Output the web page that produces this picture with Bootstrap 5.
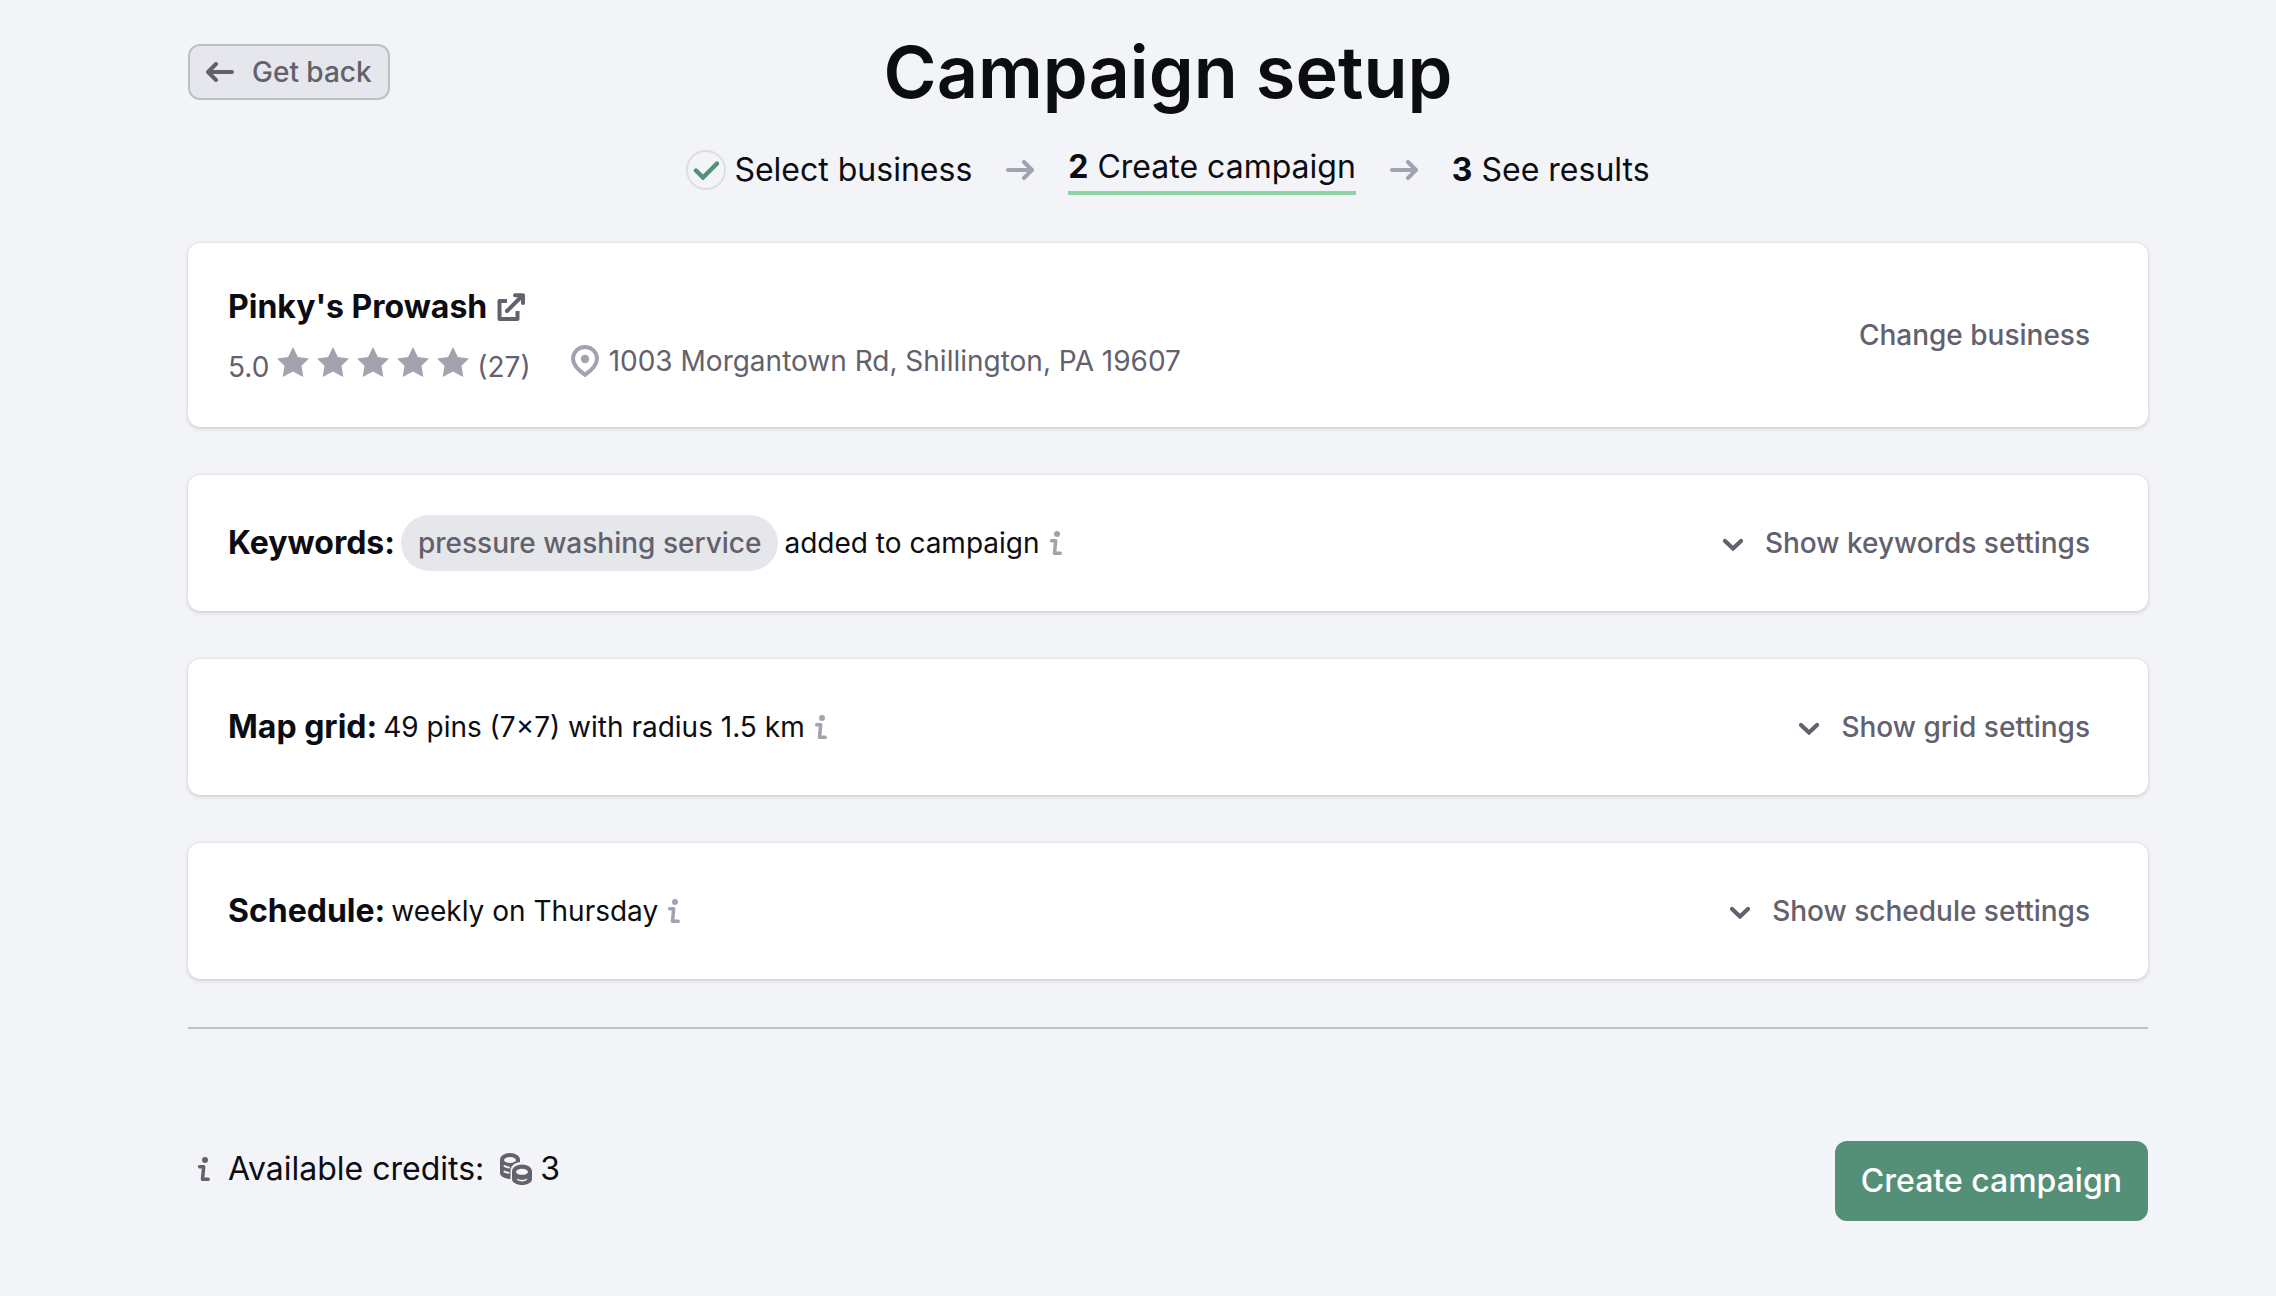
<!DOCTYPE html>
<html lang="en">
<head>
<meta charset="utf-8">
<meta name="viewport" content="width=device-width, initial-scale=1">
<title>Campaign setup</title>
<link href="https://cdn.jsdelivr.net/npm/bootstrap@5.3.0/dist/css/bootstrap.min.css" rel="stylesheet">
<style>
  :root { --ink: #0c0d12; --slate: #62616d; --mist: #a3a2af; --page: #f3f4f8; --green: #549077; }
  body { background: var(--page); color: var(--ink); font-family: Inter, "Liberation Sans", sans-serif; font-size: 28px; line-height: 40px; }
  svg { flex: none; fill: none; stroke: currentColor; stroke-linecap: round; display: block; }
  .page-shell { padding: 28px 128px 40px 188px; }
  .btn { --bs-btn-font-size: 28px; --bs-btn-line-height: 40px; --bs-btn-font-weight: 500; --bs-btn-border-radius: 12px; --bs-btn-border-width: 2px; }
  .btn-back { --bs-btn-padding-x: 16px; --bs-btn-padding-y: 6px; --bs-btn-color: var(--slate); --bs-btn-bg: #e6e7ec; --bs-btn-border-color: #bfbfc9; --bs-btn-hover-bg: #dddee4; margin-top: 16px; gap: 18px; }
  .btn-plain { --bs-btn-padding-x: 16px; --bs-btn-padding-y: 6px; --bs-btn-color: var(--slate); --bs-btn-hover-color: var(--ink); gap: 22px; }
  .btn-create { --bs-btn-font-size: 32px; --bs-btn-line-height: 48px; --bs-btn-padding-x: 24px; --bs-btn-padding-y: 14px; --bs-btn-color: #fff; --bs-btn-bg: var(--green); --bs-btn-border-color: var(--green); --bs-btn-hover-color: #fff; --bs-btn-hover-bg: #467c66; }
  .page-title { font-size: 72px; line-height: 88px; font-weight: 600; }
  .steps { font-size: 32px; line-height: 40px; gap: 28px; margin: 28px 0 48px; color: var(--ink); }
  .step-now { border-bottom: 4px solid #8dd3a6; line-height: 46px; padding-bottom: 1px; }
  .check-ring { width: 40px; height: 40px; border: 2px solid #dddee5; color: var(--green); }
  .panel { --bs-card-border-width: 0; --bs-card-border-radius: 12px; --bs-card-bg: #fff; --bs-card-color: var(--ink); box-shadow: 0 2px 4px rgba(12, 13, 18, .12), 0 0 2px rgba(12, 13, 18, .16); margin-bottom: 48px; padding: 40px; min-height: 136px; }
  .panel-title { font-size: 32px; line-height: 48px; font-weight: 700; }
  .summary { gap: 6px; }
  .summary svg { margin-left: 4px; }
  .keyword-pill { font-weight: 500; color: var(--slate); background: #e6e7eb; padding: 8px 17px; }
  .text-slate { color: var(--slate); }
  .text-mist { color: var(--mist); }
  .biz-meta { gap: 40px; }
  .rating { padding-top: 8px; }
  .biz-address { padding-top: 2px; gap: 10px; }
  .rule-line { border-top: 2px solid #bfbfc9; opacity: 1; margin: 0 0 112px; }
  .credits { font-size: 32px; line-height: 48px; padding: 4px 0 0 10px; }
  .credits-info { margin-right: 18px; }
</style>
</head>
<body>
<svg width="0" height="0" class="position-absolute" aria-hidden="true">
  <symbol id="arrow-next" viewBox="0 0 40 20"><path d="M8 10H32M24 2l8 8-8 8" stroke-width="4" stroke-linejoin="round"/></symbol>
  <symbol id="info" viewBox="0 0 12 24"><circle cx="7" cy="3" r="3" fill="currentColor" stroke="none"/><path d="M1.700 9.700H5.700L4.500 22.200H10.200" stroke-width="3.500" stroke-linejoin="round"/></symbol>
  <symbol id="star" viewBox="0 0 32 30"><path d="M16 0l4.900 9.900L32 11.500l-7.500 7.200L26.300 30 16 24.600 5.700 30l1.800-11.300L0 11.500l11.100-1.600z" fill="currentColor" stroke="none"/></symbol>
  <symbol id="chevron" viewBox="0 0 20 16"><path d="M2 6l8 7.500L18 6" stroke-width="4.200"/></symbol>
</svg>

<div class="container-fluid page-shell">
  <header>
    <div class="row g-0 align-items-start">
      <div class="col">
        <a href="#" class="btn btn-back d-inline-flex align-items-center">
          <svg width="28" height="20" viewBox="0 0 28 20" aria-hidden="true"><path d="M2 10H26M10 2l-8 8 8 8" stroke-width="4" stroke-linejoin="round"/></svg>
          Get back
        </a>
      </div>
      <div class="col-auto"><h1 class="page-title mb-0">Campaign setup</h1></div>
      <div class="col"></div>
    </div>
    <ol class="steps list-unstyled d-flex justify-content-center align-items-center">
      <li class="d-flex align-items-center gap-2">
        <span class="check-ring rounded-circle d-flex align-items-center justify-content-center">
          <svg width="26" height="20" viewBox="0 0 26 20" role="img" aria-label="Completed"><path d="M3 10.500l7 7L24 3.500" stroke-width="4.400"/></svg>
        </span>
        <span>Select business</span>
      </li>
      <li class="text-mist" aria-hidden="true"><svg width="40" height="20"><use href="#arrow-next"/></svg></li>
      <li class="step-now" aria-current="step"><strong>2</strong> Create campaign</li>
      <li class="text-mist" aria-hidden="true"><svg width="40" height="20"><use href="#arrow-next"/></svg></li>
      <li><strong>3</strong> See results</li>
    </ol>
  </header>

  <main>
    <section class="card panel flex-row align-items-center justify-content-between">
      <div>
        <h2 class="panel-title mb-0 d-flex align-items-center gap-2">
          Pinky's Prowash
          <a href="#" class="text-slate" aria-label="Open business page">
            <svg width="32" height="32" viewBox="0 0 32 32" stroke-linejoin="round"><path d="M12 10H4.500V28H22.500V20" stroke-width="4" stroke-linecap="butt"/><path d="M12 20L26 6" stroke-width="4"/><path d="M20 4.200H28V12" stroke-width="4" /></svg>
          </a>
        </h2>
        <div class="biz-meta d-flex align-items-start text-slate mt-2">
          <div class="rating d-flex gap-2">
            <span>5.0</span>
            <span class="text-mist d-flex gap-2" role="img" aria-label="5 out of 5 stars">
              <svg width="32" height="30"><use href="#star"/></svg><svg width="32" height="30"><use href="#star"/></svg><svg width="32" height="30"><use href="#star"/></svg><svg width="32" height="30"><use href="#star"/></svg><svg width="32" height="30"><use href="#star"/></svg>
            </span>
            <span>(27)</span>
          </div>
          <div class="biz-address d-flex align-items-center">
            <svg class="text-mist" width="28" height="32" viewBox="0 0 28 32" aria-hidden="true"><path d="M14 2C7.400 2 2 7.200 2 13.800c0 6.600 5.500 11.500 12 16.100 6.500-4.600 12-9.500 12-16.100C26 7.200 20.600 2 14 2z" stroke-width="4"/><circle cx="14" cy="14" r="4.200" fill="currentColor" stroke="none"/></svg>
            <span>1003 Morgantown Rd, Shillington, PA 19607</span>
          </div>
        </div>
      </div>
      <button type="button" class="btn btn-plain">Change business</button>
    </section>

    <section class="card panel flex-row align-items-center justify-content-between">
      <div class="summary d-flex align-items-center">
        <h2 class="panel-title mb-0">Keywords:</h2>
        <span class="keyword-pill rounded-pill">pressure washing service</span>
        <span>added to campaign</span>
        <svg class="text-mist" width="12" height="24" role="img" aria-label="Info"><use href="#info"/></svg>
      </div>
      <button type="button" class="btn btn-plain d-flex align-items-center"><svg width="20" height="16" aria-hidden="true"><use href="#chevron"/></svg>Show keywords settings</button>
    </section>

    <section class="card panel flex-row align-items-center justify-content-between">
      <div class="summary d-flex align-items-center">
        <h2 class="panel-title mb-0">Map grid:</h2>
        <span>49 pins (7×7) with radius 1.5 km</span>
        <svg class="text-mist" width="12" height="24" role="img" aria-label="Info"><use href="#info"/></svg>
      </div>
      <button type="button" class="btn btn-plain d-flex align-items-center"><svg width="20" height="16" aria-hidden="true"><use href="#chevron"/></svg>Show grid settings</button>
    </section>

    <section class="card panel flex-row align-items-center justify-content-between">
      <div class="summary d-flex align-items-center">
        <h2 class="panel-title mb-0">Schedule:</h2>
        <span>weekly on Thursday</span>
        <svg class="text-mist" width="12" height="24" role="img" aria-label="Info"><use href="#info"/></svg>
      </div>
      <button type="button" class="btn btn-plain d-flex align-items-center"><svg width="20" height="16" aria-hidden="true"><use href="#chevron"/></svg>Show schedule settings</button>
    </section>
  </main>

  <hr class="rule-line">

  <footer class="d-flex align-items-start justify-content-between">
    <div class="credits d-flex align-items-center">
      <svg class="credits-info text-slate" width="12" height="24" role="img" aria-label="Info"><use href="#info"/></svg>
      <span class="me-3">Available credits:</span>
      <svg class="text-slate me-2" width="32" height="32" viewBox="0 0 32 32" aria-hidden="true">
        <path d="M0 7C0 3 4.500 0 10 0s10 3 10 6.500V9c-5 .7-9.500 4-9.500 8v9C4.500 25.600 0 23.500 0 20z" fill="currentColor" stroke="none"/>
        <ellipse cx="10" cy="7" rx="6" ry="3" fill="#f3f4f8" stroke="none"/>
        <path d="M4.500 13c1 .8 2.500 1.300 4.500 1.500M4.500 18.500c1 .8 2.500 1.200 4 1.300" stroke="#f3f4f8" stroke-width="2"/>
        <path d="M12 18.500c0-4 4.500-7 10-7s10 3 10 7V26c0 3.500-4.500 6-10 6s-10-2.500-10-6z" fill="currentColor" stroke="none"/>
        <ellipse cx="22" cy="18.800" rx="6" ry="3" fill="#f3f4f8" stroke="none"/>
        <path d="M16.500 25.500c3 1.800 8 1.800 11 0-.6 4-10.400 4-11 0z" fill="#f3f4f8" stroke="none"/>
      </svg>
      <span>3</span>
    </div>
    <button type="button" class="btn btn-create">Create campaign</button>
  </footer>
</div>
<script src="https://cdn.jsdelivr.net/npm/bootstrap@5.3.0/dist/js/bootstrap.bundle.min.js"></script>
</body>
</html>
